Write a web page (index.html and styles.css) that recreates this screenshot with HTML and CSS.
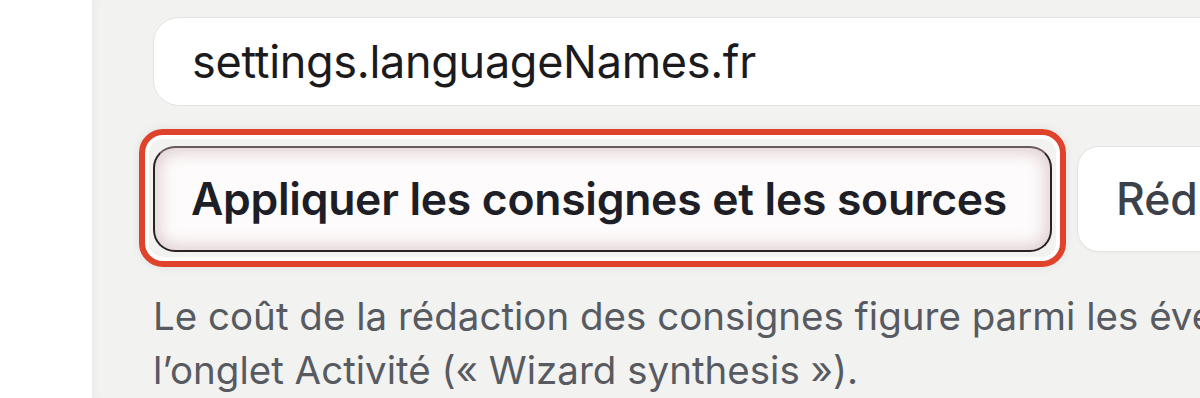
FILE: index.html
```html
<!DOCTYPE html>
<html lang="fr">
<head>
<meta charset="utf-8">
<link rel="stylesheet" href="styles.css">
</head>
<body>
<div class="page">
  <div class="gutter"></div>
  <div class="panel">
    <div class="field">settings.languageNames.fr</div>
    <div class="actions">
      <div class="btn btn-primary">Appliquer les consignes et les sources</div>
      <div class="btn btn-secondary">Rédiger les consignes</div>
    </div>
    <p class="note">Le coût de la rédaction des consignes figure parmi les événements de l’onglet Activité (« Wizard synthesis »).</p>
  </div>
</div>
</body>
</html>
```
FILE: styles.css
```css
html, body {
  margin: 0;
  padding: 0;
  background: #ffffff;
  overflow: hidden;
}
.page {
  display: flex;
  width: 1200px;
  height: 398px;
  font-family: Inter, "Noto Sans", sans-serif;
}
.gutter {
  width: 92px;
  flex: none;
  background: #ffffff;
}
.panel {
  flex: 1;
  background: #f2f2f1;
  padding: 17px 0 0 61px;
  box-shadow: inset 6px 0 8px -6px rgba(0,0,0,0.06);
  min-width: 0;
  overflow: hidden;
}
.field {
  width: 1200px;
  height: 89px;
  box-sizing: border-box;
  background: #ffffff;
  border: 1px solid #e3e3e1;
  border-radius: 26px;
  padding-left: 38px;
  display: flex;
  align-items: center;
  font-size: 45px;
  color: #1b1b1d;
  letter-spacing: -0.3px;
}
.actions {
  display: flex;
  gap: 25px;
  margin-top: 40px;
  white-space: nowrap;
}
.btn {
  height: 106px;
  box-sizing: border-box;
  border-radius: 22px;
  display: flex;
  align-items: center;
  font-size: 44.5px;
  flex: none;
}
.btn-primary {
  position: relative;
  padding: 0 36px 0 36px;
  width: 899px;
  background: #fdfbfb;
  border: 2px solid #2b2223;
  border-top-color: #6b5a5b;
  box-shadow: inset 0 0 16px 4px rgba(170, 120, 125, 0.35);
  font-weight: 600;
  color: #1d1e26;
  letter-spacing: -0.3px;
}
.btn-primary::before {
  content: "";
  position: absolute;
  left: -16px;
  top: -19px;
  right: -16px;
  bottom: -17px;
  border: 6px solid #e0432b;
  border-radius: 24px;
  background: transparent;
  box-shadow: inset 0 0 0 4px #ffffff, 0 0 10px rgba(0,0,0,0.08);
  pointer-events: none;
}
.btn-secondary {
  padding: 0 38px;
  background: #ffffff;
  border: 1px solid #e4e4e2;
  box-shadow: 0 1px 3px rgba(0,0,0,0.04);
  color: #3b4049;
  font-weight: 500;
}
.note {
  margin: 37px 0 0 0;
  font-size: 38.5px;
  line-height: 54px;
  color: #575b61;
  width: 1400px;
}
```
